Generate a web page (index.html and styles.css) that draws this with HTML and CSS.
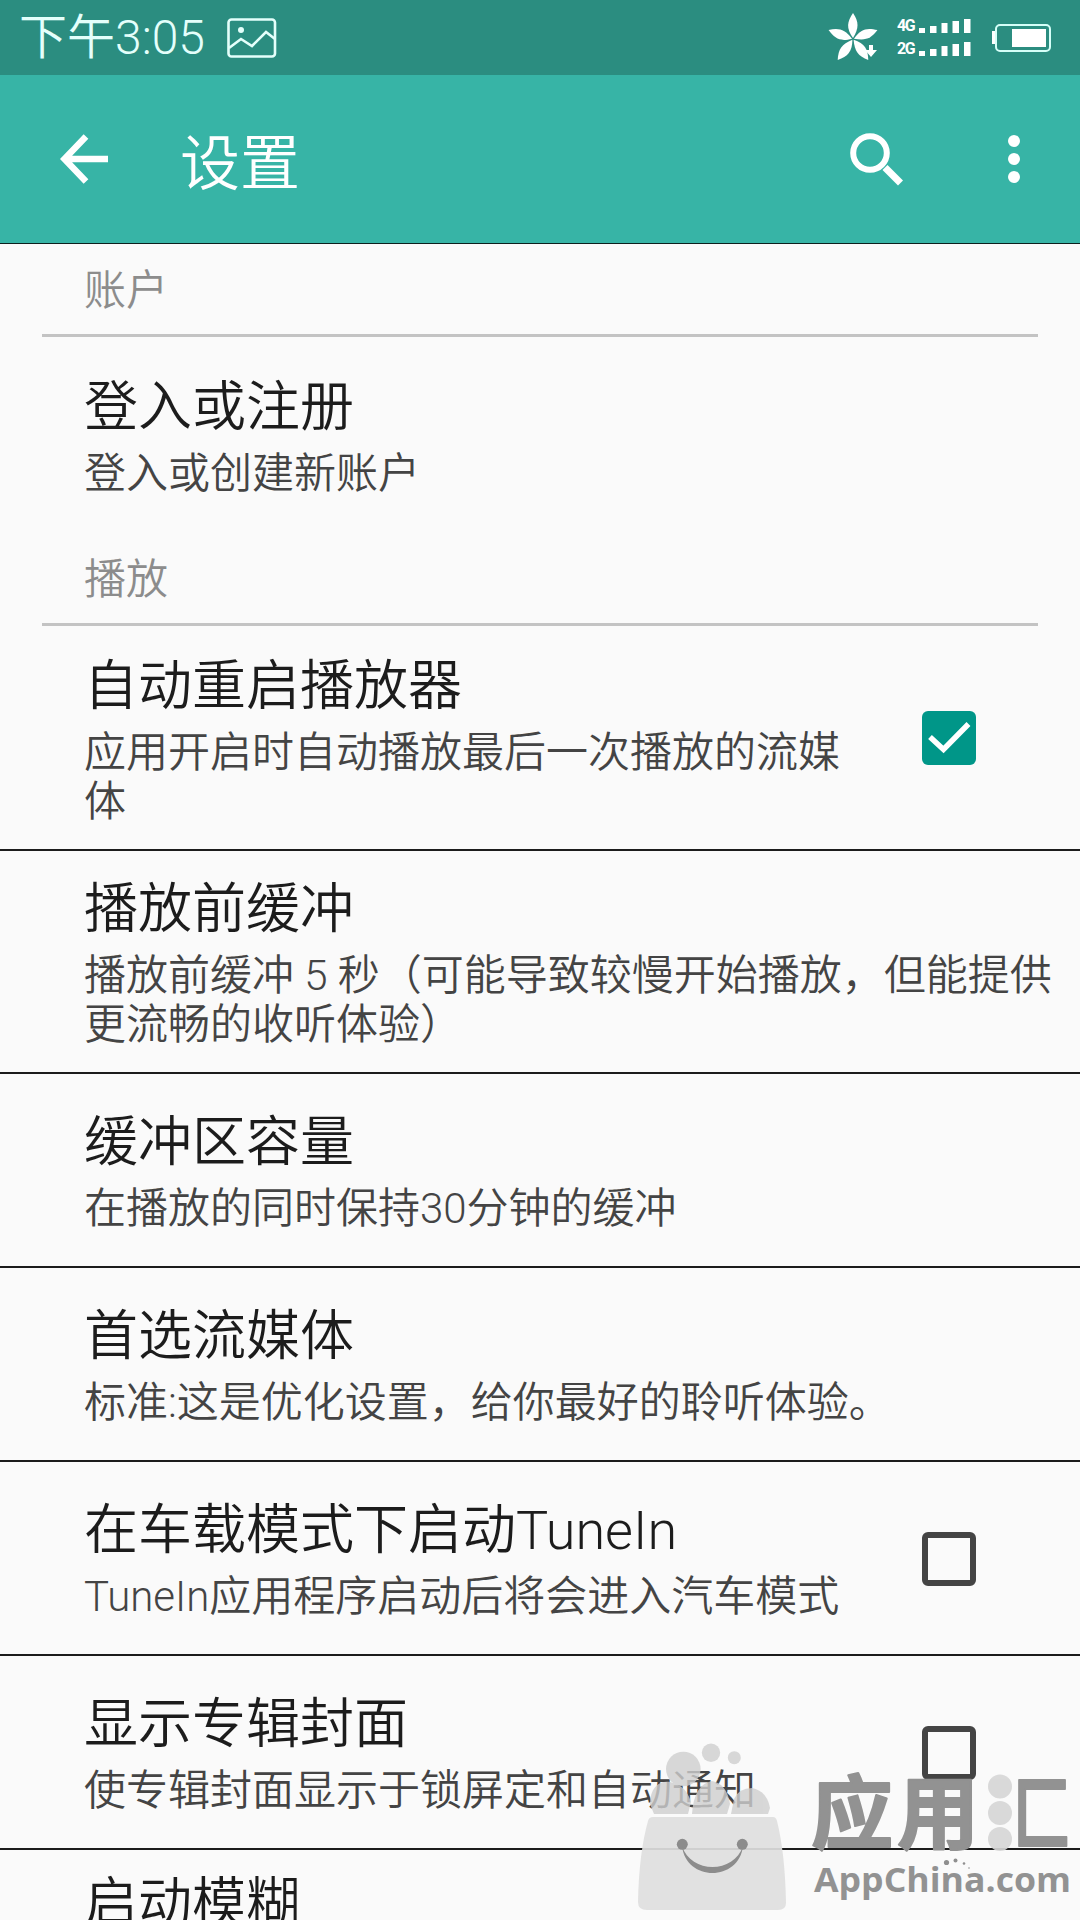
FILE: index.html
```html
<!DOCTYPE html>
<html lang="zh-CN">
<head>
    <meta charset="UTF-8">
    <meta name="viewport" content="width=device-width, initial-scale=1.0">
    <title>设置</title>
    <link rel="stylesheet" href="styles.css">
</head>
<body>
    <div class="screen">
        <div class="status-bar">
            <span class="clock">下午3:05</span>
            <svg class="icon-picture" width="50" height="40" viewBox="0 0 50 40" fill="none" stroke="#e4fffb" stroke-width="2.6">
                <rect x="1.5" y="1.5" width="46.5" height="37" rx="3"/>
                <path d="M2 30 L14 21 L25 28 L39 14 L48 21"/>
                <circle cx="14" cy="12" r="3" fill="#e4fffb" stroke="none"/>
            </svg>
            <div class="status-right">
                <svg width="50" height="50" viewBox="0 0 50 50" fill="#fff">
                    <g id="petals">
                        <path d="M25 25 C18 15 19 9 25 0 C31 9 31 15 25 25Z"/>
                        <path d="M25 25 C18 15 19 9 25 0 C31 9 31 15 25 25Z" transform="rotate(70 25 26)"/>
                        <path d="M25 25 C18 15 19 9 25 0 C31 9 31 15 25 25Z" transform="rotate(144 25 26)"/>
                        <path d="M25 25 C18 15 19 9 25 0 C31 9 31 15 25 25Z" transform="rotate(216 25 26)"/>
                        <path d="M25 25 C18 15 19 9 25 0 C31 9 31 15 25 25Z" transform="rotate(290 25 26)"/>
                    </g>
                    <path d="M41 32 h4 v5 h4 l-6 7 l-6 -7 h4z"/>
                </svg>
                <div class="signals">
                    <div class="signal">
                        <span>4G</span>
                        <svg width="52" height="14" viewBox="0 0 52 14" fill="#fff"><path d="M0 9h6v5h-6zM11 7h6.500v7h-6.500zM22.500 4h6v10h-6zM33.500 2h6.500v12h-6.500zM45 0h6.500v14h-6.500z"/></svg>
                    </div>
                    <div class="signal">
                        <span>2G</span>
                        <svg width="52" height="14" viewBox="0 0 52 14" fill="#fff"><path d="M0 9h6v5h-6zM11 7h6.500v7h-6.500zM22.500 4h6v10h-6zM33.500 2h6.500v12h-6.500zM45 0h6.500v14h-6.500z"/></svg>
                    </div>
                </div>
                <svg width="60" height="28" viewBox="0 0 60 28">
                    <rect x="4" y="1" width="54" height="26" rx="4" fill="none" stroke="#d5fff8" stroke-width="2"/>
                    <path d="M0 7h3v13h-3zM20 5h34v18h-34z" fill="#fff"/>
                </svg>
            </div>
        </div>

        <div class="app-bar">
            <svg width="50" height="50" viewBox="0 0 50 50" fill="none" stroke="#fff" stroke-width="6.500">
                <path d="M26 2.500 L4.500 25 L26 47.500 M5 25 H48"/>
            </svg>
            <h1>设置</h1>
            <div class="actions">
                <svg width="53" height="53" viewBox="0 0 53 53" fill="none" stroke="#fff">
                    <circle cx="20" cy="20" r="16.800" stroke-width="6"/>
                    <path d="M35 34.500 L50.500 50" stroke-width="7"/>
                </svg>
                <svg width="12" height="48" viewBox="0 0 12 48" fill="#fff">
                    <circle cx="6" cy="6" r="6"/>
                    <circle cx="6" cy="24" r="6"/>
                    <circle cx="6" cy="42" r="6"/>
                </svg>
            </div>
        </div>

        <div class="settings">
            <h2 class="category">账户</h2>
            <div class="row login">
                <div class="text">
                    <div class="title">登入或注册</div>
                    <div class="summary">登入或创建新账户</div>
                </div>
            </div>

            <h2 class="category">播放</h2>
            <div class="row tall first">
                <div class="text">
                    <div class="title">自动重启播放器</div>
                    <div class="summary">应用开启时自动播放最后一次播放的流媒体</div>
                </div>
                <div class="check checked">
                    <svg width="54" height="54" viewBox="0 0 54 54" fill="none" stroke="#fff" stroke-width="5.500"><path d="M8 26 L21.500 38.500 L46.500 13"/></svg>
                </div>
            </div>
            <div class="row tall">
                <div class="text">
                    <div class="title">播放前缓冲</div>
                    <div class="summary">播放前缓冲 5 秒（可能导致较慢开始播放，但能提供更流畅的收听体验）</div>
                </div>
            </div>
            <div class="row">
                <div class="text">
                    <div class="title">缓冲区容量</div>
                    <div class="summary">在播放的同时保持30分钟的缓冲</div>
                </div>
            </div>
            <div class="row">
                <div class="text">
                    <div class="title">首选流媒体</div>
                    <div class="summary">标准:这是优化设置，给你最好的聆听体验。</div>
                </div>
            </div>
            <div class="row">
                <div class="text">
                    <div class="title">在车载模式下启动TuneIn</div>
                    <div class="summary">TuneIn应用程序启动后将会进入汽车模式</div>
                </div>
                <div class="check"></div>
            </div>
            <div class="row">
                <div class="text">
                    <div class="title">显示专辑封面</div>
                    <div class="summary">使专辑封面显示于锁屏定和自动通知</div>
                </div>
                <div class="check"></div>
            </div>
            <div class="row last">
                <div class="text">
                    <div class="title">启动模糊</div>
                </div>
            </div>
        </div>

        <svg class="watermark" width="444" height="180" viewBox="0 0 444 180" role="img" aria-label="应用汇 AppChina.com">
            <g fill="#cfcfcf" opacity="0.8">
                <circle cx="47.300" cy="29" r="17.300"/>
                <circle cx="75" cy="12.700" r="9.200"/>
                <circle cx="98.300" cy="17.700" r="6.500"/>
                <path d="M14 64 C14 47 24 40 34 42 Q50 45 55 62 L52 74 H18Z"/>
                <path d="M56 74 Q58 44 76 41 Q91 44 94 64 L91 74Z"/>
                <path d="M95 74 L98 59 Q103 48 116 48 Q131 51 134 68 L132 74Z"/>
            </g>
            <path d="M17 77 H137 Q140 77 141 81 Q149 113 150 163 Q150 170 142 170 H11 Q2 170 2 162 Q3 113 12 81 Q13 77 17 77Z" fill="#dedede" opacity="0.92"/>
            <g fill="#8c8c8c">
                <circle cx="46.300" cy="104.300" r="5.500"/>
                <circle cx="106.300" cy="104.300" r="5.500"/>
                <path d="M46 106 C50 142 103 142 107 106 C98 134 55 134 46 106Z"/>
            </g>
            <g class="brand">
                <text x="175" y="102" textLength="82" lengthAdjust="spacingAndGlyphs">应</text>
                <text x="261" y="102" textLength="82" lengthAdjust="spacingAndGlyphs">用</text>
                <text x="377" y="103" textLength="58" lengthAdjust="spacingAndGlyphs">匚</text>
            </g>
            <g fill="#d6d6d6" opacity="0.9">
                <circle cx="364" cy="46.500" r="12"/>
                <circle cx="364" cy="73" r="12"/>
                <circle cx="364" cy="99" r="12"/>
            </g>
            <text class="domain" x="178" y="152" textLength="257" lengthAdjust="spacingAndGlyphs">AppChina.com</text>
            <g fill="#8f8f8f">
                <circle cx="310.500" cy="122.500" r="2.600"/>
                <circle cx="319.500" cy="120.500" r="2"/>
                <circle cx="328" cy="123.500" r="1.300"/>
                <circle cx="333" cy="128" r="0.800"/>
            </g>
        </svg>
    </div>
</body>
</html>
```
FILE: styles.css
```css
* {
    box-sizing: border-box;
}
body {
    margin: 0;
    font-family: Roboto, "Noto Sans CJK SC", sans-serif;
    font-weight: 350;
    background-color: #fafafa;
    color: #1c1c1c;
}
svg {
    display: block;
    flex: none;
}
.screen {
    position: relative;
    width: 1080px;
    height: 1920px;
    overflow: hidden;
}
.status-bar {
    display: flex;
    align-items: center;
    height: 75px;
    padding: 0 28px 0 19px;
    background-color: #2b8d80;
    color: #e4fffb;
}
.clock {
    font-size: 48px;
    line-height: 75px;
}
.icon-picture {
    margin-left: 22px;
}
.status-right {
    display: flex;
    align-items: center;
    margin-left: auto;
}
.signals {
    display: flex;
    flex-direction: column;
    gap: 9px;
    margin: 0 21px 0 19px;
}
.signal {
    display: flex;
    align-items: center;
    gap: 4px;
    height: 14px;
}
.signal span {
    width: 18px;
    font-size: 16px;
    line-height: 14px;
    font-weight: 700;
    letter-spacing: -1.5px;
    color: #fff;
}
.app-bar {
    display: flex;
    align-items: center;
    height: 169px;
    padding: 0 60px 0 60px;
    background-color: #37b4a6;
    border-bottom: 1px solid #0d1f1d;
    color: #fff;
}
h1 {
    margin: 0 0 0 70px;
    padding-top: 11px;
    font-size: 60px;
    line-height: 70px;
    font-weight: 350;
}
.actions {
    display: flex;
    align-items: center;
    gap: 105px;
    margin-left: auto;
}
.category {
    height: 93px;
    margin: 0 42px;
    padding: 17px 42px 0;
    border-bottom: 3px solid #c3c3c3;
    font-size: 42px;
    line-height: 60px;
    font-weight: 350;
    color: #8c8c8c;
}
.row {
    display: flex;
    align-items: center;
    height: 194px;
    padding: 1px 24px 0 84px;
    border-bottom: 2px solid #1c1c1c;
}
.row.login {
    height: 196px;
    border-bottom: none;
}
.row.tall {
    height: 223px;
}
.row.first {
    height: 225px;
}
.row.first .text {
    padding-top: 3px;
}
.row.last {
    align-items: flex-start;
    padding-top: 20px;
    border-bottom: none;
}
.text {
    flex: 1;
    padding-top: 1px;
}
.title {
    font-size: 54px;
    line-height: 66px;
}
.summary {
    margin-top: 8px;
    font-size: 42px;
    line-height: 49px;
    color: #444;
}
.check {
    flex: none;
    width: 54px;
    height: 54px;
    margin: 0 80px 0 60px;
    border: 6px solid #444;
    border-radius: 6px;
}
.check.checked {
    border: none;
    background-color: #009688;
}
.watermark {
    position: absolute;
    left: 636px;
    top: 1740px;
}
.brand text {
    font-family: "Noto Sans CJK SC", sans-serif;
    font-size: 80px;
    font-weight: 700;
    fill: #929292;
    stroke: #929292;
    stroke-width: 2px;
    stroke-linejoin: round;
}
.domain {
    font-family: "Open Sans", sans-serif;
    font-size: 34px;
    font-weight: 700;
    fill: #929292;
}
```
